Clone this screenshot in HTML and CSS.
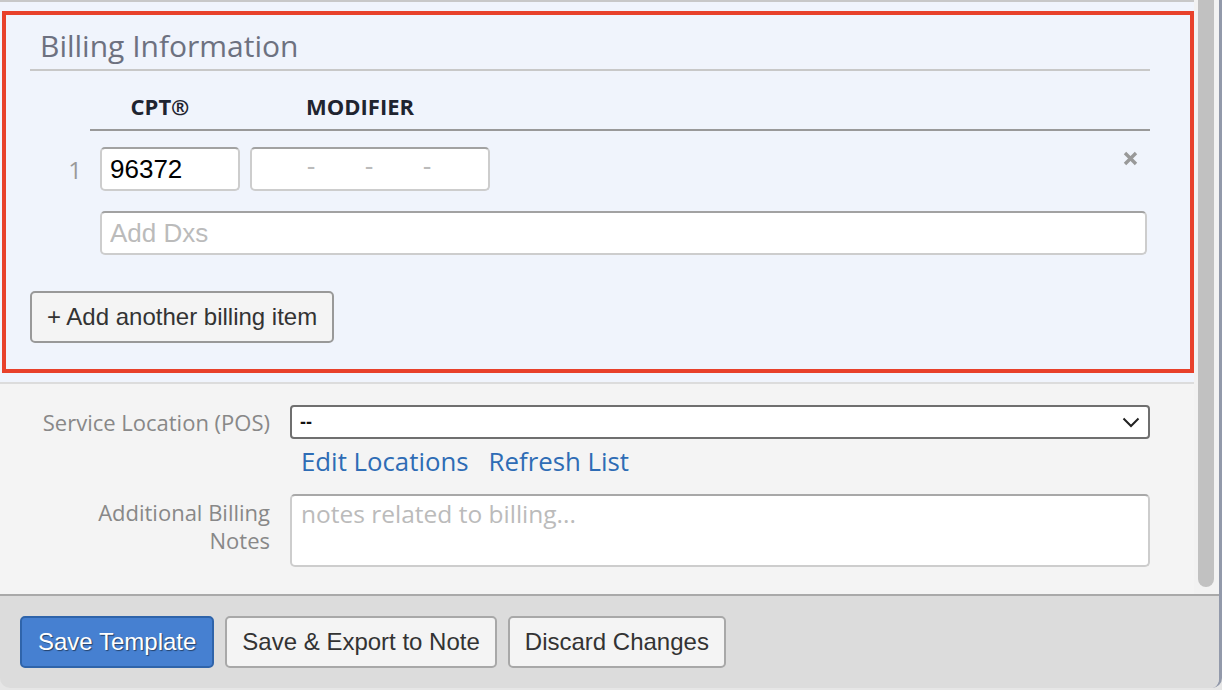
FILE: index.html
```html
<!DOCTYPE html>
<html lang="en">
<head>
    <meta charset="UTF-8">
    <meta name="viewport" content="width=device-width, initial-scale=1.0">
    <title>Billing Information</title>
    <link rel="stylesheet" href="styles.css">
</head>
<body>

    <div class="modal">
        <div class="modal-body">
            <div class="content">
                <div class="billing-wrap">
                    <section class="billing">
                        <h2 class="billing-title">Billing Information</h2>

                        <div class="billing-head">
                            <div class="head-cpt">CPT®</div>
                            <div class="head-mod">MODIFIER</div>
                        </div>

                        <div class="billing-row">
                            <div class="row-num">1</div>
                            <input type="text" class="field cpt" value="96372">
                            <div class="field modifier">
                                <span>-</span><span>-</span><span>-</span>
                            </div>
                            <button type="button" class="remove" title="Remove">
                                <svg width="15" height="15" viewBox="0 0 15 15">
                                    <path d="M2 2 L13 13 M13 2 L2 13" stroke="#999" stroke-width="3.4" fill="none"/>
                                </svg>
                            </button>
                        </div>

                        <input type="text" class="field dxs" placeholder="Add Dxs">

                        <button type="button" class="btn add-item">+ Add another billing item</button>
                    </section>
                </div>

                <div class="extra">
                    <div class="form-row center">
                        <label class="form-label">Service Location (POS)</label>
                        <div class="select-box">
                            <span>--</span>
                            <svg width="18" height="11" viewBox="0 0 18 11">
                                <polyline points="1.5,1.5 9,9 16.5,1.5" stroke="#222" stroke-width="2" fill="none"/>
                            </svg>
                        </div>
                    </div>
                    <div class="links">
                        <a href="#">Edit Locations</a>
                        <a href="#">Refresh List</a>
                    </div>
                    <div class="form-row">
                        <label class="form-label notes-label">Additional Billing<br>Notes</label>
                        <textarea class="notes" placeholder="notes related to billing..."></textarea>
                    </div>
                </div>
            </div>
            <div class="scrollbar"><div class="thumb"></div></div>
        </div>

        <div class="modal-footer">
            <button type="button" class="btn primary">Save Template</button>
            <button type="button" class="btn">Save &amp; Export to Note</button>
            <button type="button" class="btn">Discard Changes</button>
        </div>
    </div>

</body>
</html>
```

FILE: styles.css
```css
body {
    margin: 0;
    background: #e6e6e6;
    font-family: "Open Sans", "Liberation Sans", sans-serif;
}

.modal {
    width: 1219px;
    height: 688px;
    border-right: 3px solid #9299aa;
    border-radius: 0 0 10px 10px;
    overflow: hidden;
    display: flex;
    flex-direction: column;
}

.modal-body {
    height: 594px;
    display: flex;
    overflow: hidden;
}

.content {
    flex: 1;
    background: #f4f4f4;
}

.scrollbar {
    width: 25px;
    background: #f2f2f2;
    padding-left: 4px;
    box-sizing: border-box;
}

.thumb {
    width: 16px;
    height: 587px;
    background: #c1c1c1;
    border-radius: 0 0 8px 8px;
}

/* billing block */

.billing-wrap {
    background: #f0f4fc;
    border-top: 2px solid #c8c8c8;
    padding: 9px 0 9px 2px;
}

.billing {
    border: 4px solid #e8412b;
    padding: 11px 40px 26px 24px;
}

.billing-title {
    margin: 0;
    padding: 0 0 3px 10px;
    font-size: 30px;
    line-height: 40px;
    font-weight: 400;
    color: #6d7180;
    border-bottom: 2px solid #c8c8c8;
}

.billing-head {
    display: flex;
    gap: 10px;
    margin: 20px 0 0 60px;
    padding-bottom: 8px;
    border-bottom: 2px solid #999;
    font-size: 22px;
    line-height: 30px;
    font-weight: 700;
    color: #1f2430;
}

.head-cpt {
    width: 140px;
    text-align: center;
}

.head-mod {
    width: 240px;
    text-align: center;
}

.billing-row {
    display: flex;
    align-items: center;
    margin-top: 16px;
}

.row-num {
    width: 52px;
    padding-right: 18px;
    text-align: right;
    font-size: 24px;
    color: #999;
}

.field {
    box-sizing: border-box;
    height: 44px;
    border: 2px solid #cdcdcd;
    border-top-color: #a2a2a2;
    border-radius: 5px;
    background: #fff;
    font-family: "Liberation Sans", Arial, sans-serif;
    font-size: 26px;
    color: #000;
    padding: 0 8px;
    margin: 0;
    outline: none;
}

.field::placeholder {
    color: #bbb;
}

.cpt {
    width: 140px;
}

.modifier {
    width: 240px;
    margin-left: 10px;
    display: flex;
    align-items: center;
    padding-left: 30px;
    color: #bbb;
}

.modifier span {
    width: 58px;
    text-align: center;
    line-height: 30px;
    margin-top: -6px;
}

.remove {
    margin: -21px 12px 0 auto;
    padding: 0;
    border: none;
    background: none;
    display: flex;
}

.dxs {
    display: block;
    width: 1047px;
    margin: 20px 0 0 70px;
}

.btn {
    box-sizing: border-box;
    height: 52px;
    padding: 0 15px;
    border: 2px solid #a8a8a8;
    border-radius: 5px;
    background: #f4f4f4;
    font-family: "Liberation Sans", Arial, sans-serif;
    font-size: 24px;
    color: #333;
}

.add-item {
    display: block;
    margin: 36px 0 0 0;
    border-color: #999;
}

/* lower form */

.extra {
    border-top: 2px solid #dcdcdc;
    padding: 21px 44px 0 0;
}

.form-row {
    display: flex;
    gap: 20px;
}

.form-row.center {
    align-items: center;
}

.form-label {
    width: 270px;
    flex-shrink: 0;
    text-align: right;
    font-size: 22px;
    line-height: 28px;
    color: #888;
}

.notes-label {
    padding-top: 4px;
}

.select-box {
    flex: 1;
    height: 34px;
    box-sizing: border-box;
    border: 2px solid #6f6f6f;
    border-radius: 4px;
    background: #fff;
    display: flex;
    align-items: center;
    justify-content: space-between;
    padding: 0 8px 0 8px;
    font-family: "Liberation Sans", Arial, sans-serif;
    font-size: 18px;
    font-weight: 700;
    color: #111;
}

.links {
    display: flex;
    gap: 20px;
    margin: 5px 0 0 301px;
    font-size: 25.8px;
    line-height: 34px;
}

.links a {
    color: #2e6cb5;
    text-decoration: none;
}

.links + .form-row {
    margin-top: 16px;
}

.notes {
    flex: 1;
    height: 73px;
    box-sizing: border-box;
    border: 2px solid #cdcdcd;
    border-top-color: #a8a8a8;
    border-radius: 5px;
    padding: 3px 9px;
    margin: 0;
    resize: none;
    font-family: "Open Sans", sans-serif;
    font-size: 24.5px;
    line-height: 30px;
    outline: none;
}

.notes::placeholder {
    color: #bbb;
}

/* footer */

.modal-footer {
    flex: 1;
    background: #dcdcdc;
    border-top: 2px solid #a9a9a9;
    display: flex;
    gap: 11px;
    padding: 20px 0 0 20px;
}

.btn.primary {
    background: #4680d1;
    border-color: #2f64aa;
    color: #fff;
    padding: 0 16px;
    text-shadow: 1px 1px 1px rgba(0, 0, 0, 0.5);
}
```
